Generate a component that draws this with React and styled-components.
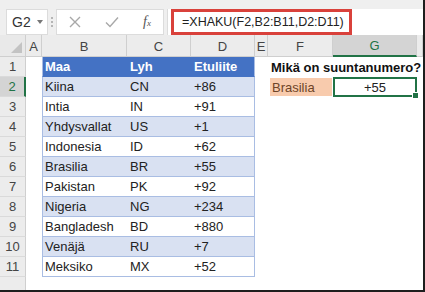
import React from 'react';
import styled, { createGlobalStyle } from 'styled-components';

const GlobalStyle = createGlobalStyle`
	html, body {
		margin: 0;
		padding: 0;
		background: #ffffff;
	}
	body {
		font-family: 'Liberation Sans', Arial, sans-serif;
	}
`;

const GREEN = '#217346';

const Window = styled.div`
	width: 423px;
	height: 290px;
	border-right: 2px solid #1e1e1e;
	border-bottom: 2px solid #1e1e1e;
	background: #ffffff;
	overflow: hidden;
	display: flex;
	flex-direction: column;
`;

const Toolbar = styled.div`
	height: 44px;
	box-sizing: border-box;
	background: #efefef;
	display: flex;
	align-items: flex-start;
	padding: 9px 0 0 6px;
`;

const NameBox = styled.div`
	width: 42px;
	height: 26px;
	box-sizing: border-box;
	background: #ffffff;
	border: 1px solid #dcdcdc;
	display: flex;
	align-items: center;
	padding-left: 5px;
	font-size: 14px;
	color: #333;
	gap: 6px;
`;

const Caret = styled.span`
	width: 0;
	height: 0;
	border-left: 3.5px solid transparent;
	border-right: 3.5px solid transparent;
	border-top: 4px solid #777;
`;

const Grip = styled.div`
	width: 3px;
	height: 26px;
	margin: 0 3px 0 2px;
	display: flex;
	flex-direction: column;
	justify-content: center;
	gap: 2px;
	align-items: center;

	span {
		width: 2px;
		height: 2px;
		background: #b5b5b5;
	}
`;

const FuncBox = styled.div`
	width: 108px;
	height: 26px;
	box-sizing: border-box;
	background: #ffffff;
	border: 1px solid #dcdcdc;
	display: flex;
	align-items: center;
	position: relative;
`;

const FuncIcon = styled.span`
	position: absolute;
	left: ${({ $x }) => $x}px;
	top: 5px;
	display: flex;
`;

const FxLabel = styled.span`
	position: absolute;
	left: 86px;
	top: 4px;
	font-family: 'Liberation Serif', 'Times New Roman', serif;
	font-style: italic;
	font-size: 14px;
	color: #555;

	sub {
		font-size: 9px;
		vertical-align: baseline;
	}
`;

const FormulaInput = styled.div`
	flex: 1;
	height: 26px;
	margin-left: 3px;
	box-sizing: border-box;
	background: #ffffff;
	border-left: 1px solid #dcdcdc;
	display: flex;
	align-items: center;
	padding-left: 3px;
`;

const Highlight = styled.div`
	height: 26px;
	width: 181px;
	box-sizing: border-box;
	border: 3px solid #d9413b;
	display: flex;
	align-items: center;
	padding-left: 8px;
	font-size: 12.5px;
	color: #222;
	white-space: nowrap;
`;

const Sheet = styled.div`
	display: grid;
	grid-template-columns: 26px 16px 85px 64px 64px 13px 65px 84px 1fr;
	grid-template-rows: 22px;
	grid-auto-rows: 20px;
	font-size: 13px;
`;

const Corner = styled.div`
	background: #e9e9e9;
	border-right: 1px solid #cfcfcf;
	border-bottom: 1px solid #cfcfcf;
	position: relative;

	&::after {
		content: '';
		position: absolute;
		right: 3px;
		bottom: 3px;
		border-left: 11px solid transparent;
		border-bottom: 11px solid #c3c3c3;
	}
`;

const ColHead = styled.div`
	background: ${({ $selected }) => ($selected ? '#d4d4d4' : '#ececec')};
	border-right: 1px solid #cfcfcf;
	border-bottom: ${({ $selected }) => ($selected ? `2px solid ${GREEN}` : '1px solid #cfcfcf')};
	color: ${({ $selected }) => ($selected ? '#217346' : '#444')};
	display: flex;
	align-items: center;
	justify-content: center;
	padding-top: 1px;
	box-sizing: border-box;
	font-size: 13px;
`;

const RowHead = styled.div`
	background: ${({ $selected }) => ($selected ? '#d4d4d4' : '#ececec')};
	border-right: ${({ $selected }) => ($selected ? `2px solid ${GREEN}` : '1px solid #cfcfcf')};
	border-bottom: 1px solid #dadada;
	color: ${({ $selected }) => ($selected ? '#217346' : '#444')};
	box-sizing: border-box;
	display: flex;
	align-items: center;
	justify-content: center;
	font-size: 13px;
`;

const Cell = styled.div`
	box-sizing: border-box;
	display: flex;
	align-items: center;
	padding-left: 3px;
	white-space: nowrap;
	min-width: 0;
`;

const TableCell = styled(Cell)`
	background: ${({ $head, $band }) => ($head ? '#4472c4' : $band ? '#d9e1f2' : '#ffffff')};
	color: ${({ $head }) => ($head ? '#ffffff' : '#222')};
	font-weight: ${({ $head }) => ($head ? 700 : 400)};
	border-bottom: 1px solid ${({ $head }) => ($head ? '#4472c4' : '#a9bde3')};
	border-left: ${({ $first }) => ($first ? '1px solid #a9bde3' : 'none')};
	border-right: ${({ $last }) => ($last ? '1px solid #a9bde3' : 'none')};
	padding-left: ${({ $first }) => ($first ? '2px' : '3px')};
`;

const Question = styled(Cell)`
	font-weight: 700;
	font-size: 13px;
	color: #111;
	padding-left: 3px;
	overflow: visible;
	position: relative;
	z-index: 1;
`;

const LookupCell = styled(Cell)`
	background: #f8cbad;
	color: #6e4427;
	margin: 1px 1px 1px 2px;
	padding-left: 2px;
`;

const ResultCell = styled(Cell)`
	border: 2px solid ${GREEN};
	justify-content: center;
	padding-left: 0;
	color: #222;
	position: relative;

	&::after {
		content: '';
		position: absolute;
		right: -4px;
		bottom: -4px;
		width: 5px;
		height: 5px;
		background: ${GREEN};
		border: 1px solid #ffffff;
	}
`;

const columns = ['A', 'B', 'C', 'D', 'E', 'F', 'G', ''];

const countries = [
	['Kiina', 'CN', '+86'],
	['Intia', 'IN', '+91'],
	['Yhdysvallat', 'US', '+1'],
	['Indonesia', 'ID', '+62'],
	['Brasilia', 'BR', '+55'],
	['Pakistan', 'PK', '+92'],
	['Nigeria', 'NG', '+234'],
	['Bangladesh', 'BD', '+880'],
	['Venäjä', 'RU', '+7'],
	['Meksiko', 'MX', '+52'],
];

const Cross = () => (
	<svg width="14" height="14" viewBox="0 0 14 14">
		<path d="M2 2 L12 12 M12 2 L2 12" stroke="#a8a8a8" strokeWidth="1.4" fill="none" />
	</svg>
);

const Check = () => (
	<svg width="16" height="14" viewBox="0 0 16 14">
		<path d="M2 7.5 L6 11.5 L14 2.5" stroke="#a8a8a8" strokeWidth="1.4" fill="none" />
	</svg>
);

const TableRow = ({ row, cells, head, band, children }) => (
	<>
		<RowHead $selected={row === 2}>{row}</RowHead>
		<Cell />
		<TableCell $head={head} $band={band} $first>{cells[0]}</TableCell>
		<TableCell $head={head} $band={band}>{cells[1]}</TableCell>
		<TableCell $head={head} $band={band} $last>{cells[2]}</TableCell>
		<Cell />
		{children || (
			<>
				<Cell />
				<Cell />
			</>
		)}
		<Cell />
	</>
);

export default function App() {
	return (
		<>
			<GlobalStyle />
			<Window>
				<Toolbar>
					<NameBox>
						G2
						<Caret />
					</NameBox>
					<Grip>
						<span />
						<span />
						<span />
					</Grip>
					<FuncBox>
						<FuncIcon $x={11}><Cross /></FuncIcon>
						<FuncIcon $x={47}><Check /></FuncIcon>
						<FxLabel>f<sub>x</sub></FxLabel>
					</FuncBox>
					<FormulaInput>
						<Highlight>=XHAKU(F2,B2:B11,D2:D11)</Highlight>
					</FormulaInput>
				</Toolbar>
				<Sheet>
					<Corner />
					{columns.map((c, i) => (
						<ColHead key={i} $selected={c === 'G'}>{c}</ColHead>
					))}

					<TableRow row={1} cells={['Maa', 'Lyh', 'Etuliite']} head>
						<Question>Mikä on suuntanumero?</Question>
						<Cell />
					</TableRow>

					{countries.map((cells, i) => (
						<TableRow key={cells[1]} row={i + 2} cells={cells} band={i % 2 === 0}>
							{i === 0 ? (
								<>
									<LookupCell>Brasilia</LookupCell>
									<ResultCell>+55</ResultCell>
								</>
							) : null}
						</TableRow>
					))}

					<RowHead />
				</Sheet>
			</Window>
		</>
	);
}
